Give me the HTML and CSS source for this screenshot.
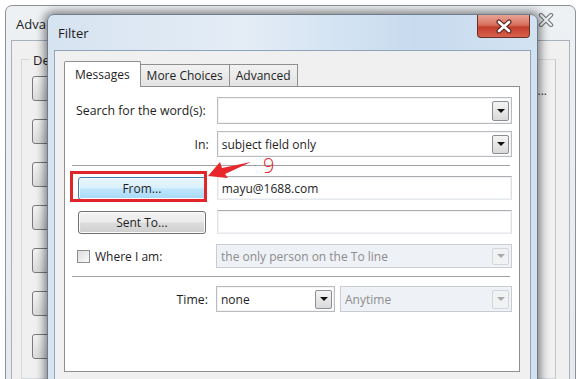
FILE: index.html
```html
<!DOCTYPE html>
<html lang="en">
<head>
  <meta charset="UTF-8">
  <meta name="viewport" content="width=device-width, initial-scale=1.0">
  <title>Filter</title>
  <link rel="stylesheet" href="styles.css">
</head>
<body>
  <div class="desk">

    <!-- dialog behind (mostly covered by the filter window) -->
    <div class="win-back">
      <div class="back-title">
        <span class="back-caption">Adva</span>
        <span class="back-close">
          <svg width="16" height="14" viewBox="0 0 16 14">
            <path d="M3 2 L13 12 M13 2 L3 12" stroke="#7b7f85" stroke-width="4.5" stroke-linecap="round"/>
            <path d="M3 2 L13 12 M13 2 L3 12" stroke="#f4f5f6" stroke-width="2" stroke-linecap="round"/>
          </svg>
        </span>
      </div>
      <div class="back-client">
        <div class="back-group">
          <span class="back-legend">De</span>
          <div class="back-buttons">
            <span class="back-btn"></span>
            <span class="back-btn"></span>
            <span class="back-btn"></span>
            <span class="back-btn"></span>
            <span class="back-btn"></span>
            <span class="back-btn"></span>
            <span class="back-btn"></span>
          </div>
          <span class="back-dots">...</span>
        </div>
      </div>
    </div>

    <!-- filter dialog -->
    <div class="win-front">
      <div class="title-bar">
        <span class="caption">Filter</span>
        <span class="close-btn">
          <svg width="18" height="15" viewBox="0 0 18 15">
            <path d="M4 3 L14 12 M14 3 L4 12" stroke="#5a2a24" stroke-width="5" stroke-linecap="round"/>
            <path d="M4 3 L14 12 M14 3 L4 12" stroke="#ffffff" stroke-width="2.6" stroke-linecap="round"/>
          </svg>
        </span>
      </div>

      <div class="client">
        <div class="tabs">
          <span class="tab active">Messages</span>
          <span class="tab">More Choices</span>
          <span class="tab">Advanced</span>
        </div>

        <div class="panel">
          <div class="row row-search">
            <label class="lbl">Search for the word(s):</label>
            <div class="combo">
              <span class="combo-text"></span>
              <span class="drop"><i class="tri"></i></span>
            </div>
          </div>

          <div class="row row-in">
            <label class="lbl right">In:</label>
            <div class="combo">
              <span class="combo-text">subject field only</span>
              <span class="drop"><i class="tri"></i></span>
            </div>
          </div>

          <div class="sep"></div>

          <div class="row row-btn">
            <span class="btn btn-hot">From...</span>
            <div class="textbox">mayu@1688.com</div>
          </div>

          <div class="row row-btn">
            <span class="btn">Sent To...</span>
            <div class="textbox"></div>
          </div>

          <div class="row row-btn">
            <label class="check-lbl"><i class="check"></i>Where I am:</label>
            <div class="combo disabled">
              <span class="combo-text">the only person on the To line</span>
              <span class="drop"><i class="tri"></i></span>
            </div>
          </div>

          <div class="sep sep-low"></div>

          <div class="row row-time">
            <label class="lbl right">Time:</label>
            <div class="time-fields">
              <div class="combo combo-short">
                <span class="combo-text">none</span>
                <span class="drop"><i class="tri"></i></span>
              </div>
              <div class="combo disabled combo-rest">
                <span class="combo-text">Anytime</span>
                <span class="drop"><i class="tri"></i></span>
              </div>
            </div>
          </div>
        </div>
      </div>
    </div>

    <!-- annotation -->
    <div class="mark-box"></div>
    <svg class="mark-arrow" width="60" height="30" viewBox="0 0 60 30">
      <polygon points="8,21 20,7 22,13 51,7 25,19 28,23" fill="#e8262b"/>
    </svg>
    <span class="mark-num">9</span>
  </div>
</body>
</html>
```

FILE: styles.css
```css
body {
  margin: 0;
  background: #ffffff;
  font-family: "Open Sans", "Noto Sans", Arial, sans-serif;
  font-size: 12px;
  color: #1e1e1e;
}

.desk {
  position: relative;
  width: 584px;
  height: 379px;
  overflow: hidden;
  background: #ffffff;
}

/* ---------- window behind ---------- */

.win-back {
  position: absolute;
  left: 5px;
  top: 5px;
  width: 571px;
  height: 390px;
  border: 1px solid #8d9299;
  border-radius: 7px 7px 0 0;
  background: linear-gradient(#eef1f4, #e6eaee);
  box-sizing: border-box;
  padding: 0 5px;
}

.back-title {
  height: 34px;
  display: flex;
  align-items: flex-start;
  justify-content: space-between;
  padding: 9px 0 0 5px;
  box-sizing: border-box;
}

.back-caption {
  font-size: 13px;
  color: #222;
  white-space: nowrap;
}

.back-close {
  margin-top: -2px;
  margin-right: 16px;
}

.back-client {
  height: 340px;
  border: 1px solid #a9b2bc;
  background: #f0f0f0;
  padding: 18px 13px 0 9px;
  box-sizing: border-box;
}

.back-group {
  position: relative;
  height: 320px;
  border: 1px solid #d5d9de;
  border-right-color: #c2c7cd;
  box-sizing: border-box;
  padding: 16px 0 0 10px;
}

.back-legend {
  position: absolute;
  left: 8px;
  top: -9px;
  background: #f0f0f0;
  padding: 0 0 0 3px;
  font-size: 13px;
}

.back-buttons {
  display: flex;
  flex-direction: column;
  gap: 18px;
}

.back-btn {
  display: block;
  width: 70px;
  height: 25px;
  border: 1px solid #7a7a7a;
  border-radius: 3px;
  background: linear-gradient(#f4f4f4, #dcdcdc);
  box-sizing: border-box;
}

.back-dots {
  position: absolute;
  right: 8px;
  top: 22px;
  font-size: 12px;
  color: #333;
}

/* ---------- filter window ---------- */

.win-front {
  position: absolute;
  left: 47px;
  top: 14px;
  width: 491px;
  height: 380px;
  border: 1px solid #6f7c8b;
  border-radius: 7px 7px 0 0;
  background: linear-gradient(90deg, #d6e3f0 0%, #e4edf6 40%, #c7dbef 75%, #d3e2f1 100%);
  box-shadow: 0 0 9px 3px rgba(0, 0, 0, 0.45);
  box-sizing: border-box;
  padding: 0 6px;
}

.title-bar {
  height: 35px;
  display: flex;
  justify-content: space-between;
  align-items: flex-start;
}

.caption {
  font-size: 13px;
  color: #1a1a1a;
  margin: 9px 0 0 4px;
}

.close-btn {
  width: 53px;
  height: 23px;
  margin-right: 1px;
  border: 1px solid #6a2f28;
  border-top: none;
  border-radius: 0 0 4px 4px;
  background: linear-gradient(#e9a394 0%, #d8715f 45%, #c23e2c 55%, #d8624d 100%);
  display: flex;
  align-items: center;
  justify-content: center;
  box-sizing: border-box;
}

.client {
  height: 340px;
  border: 1px solid #8fa3b9;
  background: #f0f0f0;
  padding: 10px 10px 0 9px;
  box-sizing: border-box;
}

.tabs {
  display: flex;
  align-items: flex-end;
  height: 25px;
  position: relative;
  z-index: 1;
}

.tab {
  height: 22px;
  padding: 0 6px;
  border: 1px solid #8e8f8f;
  border-bottom: none;
  background: linear-gradient(#f2f2f2, #e3e3e3);
  display: flex;
  align-items: center;
  box-sizing: border-box;
  margin-left: -1px;
}

.tab.active {
  height: 26px;
  margin-left: 0;
  margin-bottom: -1px;
  padding: 0 10px;
  background: #ffffff;
  border-radius: 2px 2px 0 0;
}

.panel {
  height: 286px;
  border: 1px solid #8e8f8f;
  background: #ffffff;
  padding: 10px 7px 0 11px;
  box-sizing: border-box;
}

.row {
  display: flex;
  align-items: center;
  margin-top: 7px;
}

.row-search {
  margin-top: 0;
  height: 27px;
}

.row-in {
  height: 26px;
}

.row-btn {
  height: 24px;
  margin-top: 10px;
}

.row-time {
  height: 26px;
  margin-top: 8px;
}

.sep {
  height: 1px;
  margin: 8px 2px 0 -4px;
  background: #a0a0a0;
  border-bottom: 1px solid #ffffff;
}

.sep + .row-btn {
  margin-top: 9px;
}

.lbl {
  width: 133px;
  margin-right: 8px;
  white-space: nowrap;
  font-size: 12.3px;
}

.lbl.right {
  text-align: right;
}

.combo,
.textbox {
  width: 296px;
  height: 100%;
  border: 1px solid #abadb3;
  border-color: #abadb3 #dbdfe6 #e3e9ef #e2e3ea;
  box-shadow: inset 0 0 0 1px #f3f3f3;
  background: #ffffff;
  box-sizing: border-box;
  display: flex;
  align-items: center;
  padding-left: 4px;
  white-space: nowrap;
}

.combo {
  border: 1px solid #b8bbc0;
  padding-right: 2px;
}

.combo-text {
  flex: 1;
  overflow: hidden;
}

.drop {
  width: 17px;
  height: calc(100% - 5px);
  border: 1px solid #8a8d91;
  border-radius: 2px;
  background: linear-gradient(#f4f4f4, #dadada);
  box-sizing: border-box;
  display: flex;
  align-items: center;
  justify-content: center;
}

.tri {
  width: 0;
  height: 0;
  border-left: 4px solid transparent;
  border-right: 4px solid transparent;
  border-top: 4px solid #111;
}

.combo.disabled {
  background: #eef1f5;
  border-color: #c6ccd6;
  color: #8d8d8d;
}

.combo.disabled .drop {
  border-color: #d3d6db;
  background: #f1f2f4;
}

.combo.disabled .tri {
  border-top-color: #a9a9a9;
}

.time-fields {
  display: flex;
  gap: 5px;
  height: 100%;
}

.combo-short {
  width: 119px;
}

.combo-rest {
  width: 172px;
}

.btn {
  width: 128px;
  height: 23px;
  margin: 0 11px 0 2px;
  border: 1px solid #707070;
  border-radius: 3px;
  background: linear-gradient(#f2f2f2 0%, #ebebeb 48%, #dddddd 52%, #cfcfcf 100%);
  box-shadow: inset 0 0 0 1px #fcfcfc;
  box-sizing: border-box;
  display: flex;
  align-items: center;
  justify-content: center;
}

.btn-hot {
  border-color: #3c7fb1;
  background: linear-gradient(#eaf6fd 0%, #d9f0fc 48%, #bee6fd 52%, #a7d9f5 100%);
}

.check-lbl {
  width: 139px;
  display: flex;
  align-items: center;
  gap: 5px;
  margin-left: 1px;
}

.check {
  width: 13px;
  height: 13px;
  border: 1px solid #8f8f8f;
  background: linear-gradient(135deg, #dcdcdc, #fbfbfb);
  box-sizing: border-box;
}

/* ---------- annotation ---------- */

.mark-box {
  position: absolute;
  left: 70px;
  top: 171px;
  width: 137px;
  height: 31px;
  border: 3px solid #e0262b;
  box-sizing: border-box;
}

.mark-arrow {
  position: absolute;
  left: 200px;
  top: 155px;
}

.mark-num {
  position: absolute;
  left: 263px;
  top: 152px;
  font-family: "Open Sans", sans-serif;
  font-weight: 300;
  font-size: 20px;
  color: #e0262b;
}
```
